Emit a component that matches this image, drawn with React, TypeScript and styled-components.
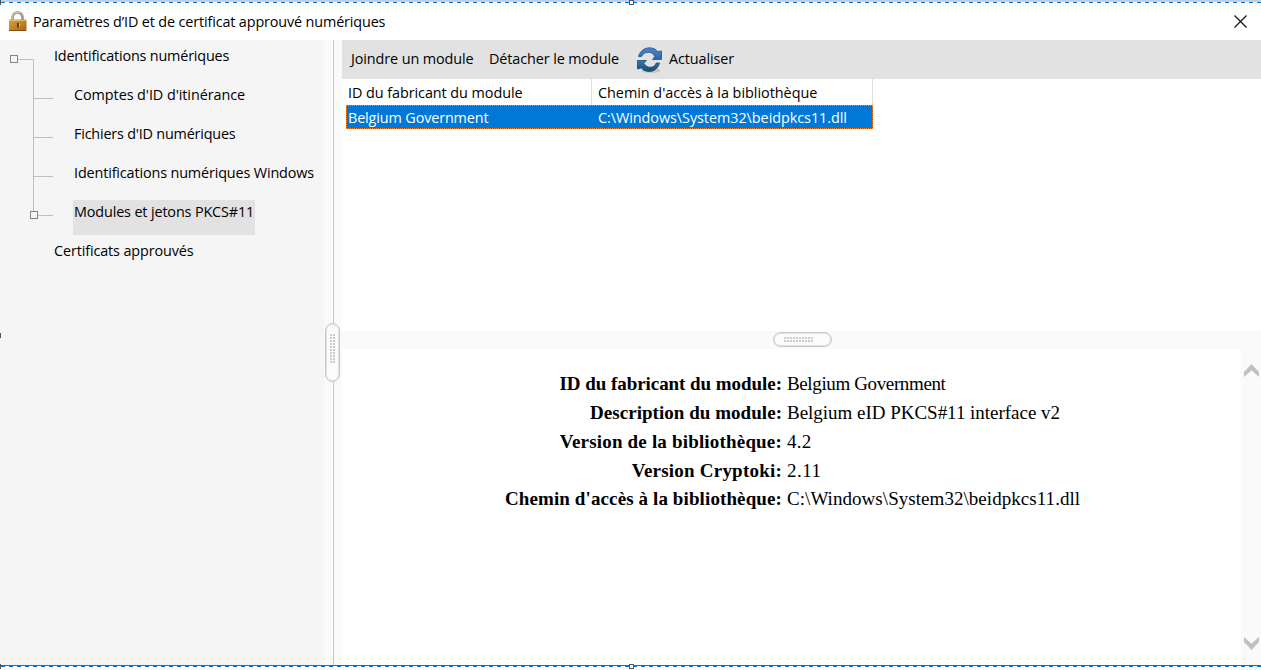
import React from 'react';
import styled, { createGlobalStyle } from 'styled-components';

const Global = createGlobalStyle`
  * { box-sizing: border-box; }
  body { margin: 0; background: #fff; }
`;

const Frame = styled.div`
  position: relative;
  width: 1261px;
  height: 670px;
  overflow: hidden;
  display: flex;
  flex-direction: column;
  background: #fff;
  color: #000;
  font: 14.4px/20px 'Open Sans', 'Noto Sans', sans-serif;
`;

const TopEdge = styled.div`
  height: 3px;
  flex: none;
  background: repeating-linear-gradient(90deg, transparent 0 1px, #0078d7 1px 5px, transparent 5px 9px) 0 2px / 8px 1px repeat-x,
    linear-gradient(#c3cfe3, #c3cfe3) 0 0 / 100% 2px no-repeat;
`;

const BottomEdge = styled.div`
  height: 5px;
  flex: none;
  border-top: 1px solid #0078d7;
  background: repeating-linear-gradient(90deg, transparent 0 1px, #0078d7 1px 5px, transparent 5px 9px) 0 0 / 8px 1px repeat-x;
`;

const Handle = styled.i<{ $x: number; $y: number }>`
  position: absolute;
  left: ${p => p.$x}px;
  top: ${p => p.$y}px;
  width: 5px;
  height: 5px;
  border: 1px solid #555;
  background: #fff;
`;

const Label = styled.span<{ $ls?: number }>`
  white-space: nowrap;
  letter-spacing: ${p => p.$ls ?? -0.1}px;
`;

const TitleBar = styled.header`
  height: 37px;
  flex: none;
  display: flex;
  align-items: center;
  padding: 0 13px 0 8px;
  svg { flex: none; }
`;

const TitleText = styled(Label)`
  flex: 1;
  margin-left: 6px;
`;

const Body = styled.main`
  flex: 1;
  min-height: 0;
  display: flex;
`;

const Sidebar = styled.nav`
  width: 324px;
  background: #f5f5f5;
`;

const TreeRow = styled.div`
  height: 39px;
  display: flex;
  align-items: flex-start;
`;

const Gutter = styled.div<{ $w: number }>`
  width: ${p => p.$w}px;
  height: 39px;
  flex: none;
`;

const TreeItem = styled.div<{ $selected?: boolean }>`
  height: 35px;
  margin-top: 4px;
  padding: 2px 1px 0;
  line-height: 20px;
  background: ${p => (p.$selected ? '#e2e2e2' : 'transparent')};
`;

const VSplit = styled.div`
  width: 18px;
  padding-left: 1px;
  background: linear-gradient(#c8c8c8, #c8c8c8) 9px 0 / 1px 100% no-repeat #fafafa;
`;

const GripBox = styled.div`
  border: 1px solid #c6c6c6;
  border-radius: 8px;
  box-shadow: inset 0 0 0 1px #e2e2e2;
  background: #fbfbfb;
  svg { display: block; }
`;

const VGrip = styled(GripBox)`
  width: 15px;
  height: 59px;
  margin-top: 283px;
  padding: 10px 0 0 4px;
`;

const HGrip = styled(GripBox)`
  width: 59px;
  height: 15px;
  padding: 4px 0 0 10px;
`;

const Content = styled.section`
  flex: 1;
  display: flex;
  flex-direction: column;
`;

const Toolbar = styled.div`
  height: 39px;
  flex: none;
  display: flex;
  align-items: center;
  padding: 0 0 2px 9px;
  background: #e2e2e2;
`;

const Tool = styled.button<{ $w: number }>`
  width: ${p => p.$w}px;
  flex: none;
  display: flex;
  align-items: center;
  padding: 0;
  border: 0;
  background: none;
  font: inherit;
  color: inherit;
  text-align: left;
  svg { margin: 2px 6px 0 0; flex: none; }
`;

const TablePane = styled.div`
  height: 252px;
  flex: none;
  padding-left: 4px;
`;

const HeadRow = styled.div`
  width: 527px;
  height: 26px;
  display: grid;
  grid-template-columns: 246px 281px;
`;

const Cell = styled.div<{ $pad: number }>`
  padding: 4px 0 0 ${p => p.$pad}px;
  border-right: 1px solid #e0e0e0;
`;

const DataRow = styled(HeadRow)`
  height: 24px;
  background: #0078d7;
  color: #fff;
  outline: 1px dotted #ff8728;
  outline-offset: -1px;
  ${Cell} { border-color: transparent; padding-top: 3px; }
`;

const HSplit = styled.div`
  height: 18px;
  flex: none;
  display: flex;
  justify-content: center;
  padding: 1px 0 0 1px;
  background: #fafafa;
`;

const Details = styled.div`
  flex: 1;
  display: flex;
  justify-content: space-between;
`;

const Facts = styled.dl`
  margin: 21px 0 0;
  width: 899px;
  display: grid;
  grid-template-columns: 440px 1fr;
  grid-template-rows: 29px 29px 29px 28px 29px;
  align-content: start;
  column-gap: 5px;
  font: 19px/28px 'Liberation Serif', serif;
`;

const Term = styled.dt<{ $ls: number }>`
  display: flex;
  justify-content: flex-end;
  font-weight: bold;
  white-space: nowrap;
  letter-spacing: ${p => p.$ls}px;
`;

const Value = styled.dd<{ $ls: number }>`
  margin: 0;
  white-space: nowrap;
  letter-spacing: ${p => p.$ls}px;
`;

const ScrollBar = styled.div`
  width: 20px;
  background: #fafafa;
  display: flex;
  flex-direction: column;
  justify-content: space-between;
  padding: 15px 0 15px 3px;
`;

const Lock = () => (
  <svg width="19" height="21" viewBox="0 0 19 21">
    <defs>
      <linearGradient id="brass" x1="0" y1="0" x2="1" y2="1">
        <stop offset="0" stopColor="#d9a43c" />
        <stop offset="1" stopColor="#a86412" />
      </linearGradient>
    </defs>
    <path d="M4.5 9V6.5a5 5 0 0 1 10 0V9" fill="none" stroke="#a6a08c" strokeWidth="3" />
    <path d="M4 8.5V6.5a5.4 5.4 0 0 1 8-4.6" fill="none" stroke="#dcd6be" strokeWidth="1" />
    <rect x="1" y="8.5" width="17.5" height="11.5" rx="1" fill="url(#brass)" />
    <path d="M1.5 9.4H18" stroke="#e8bd62" />
    <path d="M1 19.5H18" stroke="#8a4d0c" />
    <path d="M10 12v4.5" stroke="#54431f" strokeWidth="2" />
    <path d="M11.5 12.5v3" stroke="#e2b960" />
  </svg>
);

const Refresh = () => (
  <svg width="27" height="28" viewBox="0 0 27 28">
    <defs>
      <linearGradient id="steel" x1="0" y1="0" x2="0" y2="1">
        <stop offset="0" stopColor="#4d86c8" />
        <stop offset="1" stopColor="#2a66a8" />
      </linearGradient>
      <linearGradient id="deep" x1="0" y1="0" x2="0" y2="1">
        <stop offset="0" stopColor="#3a78c0" />
        <stop offset="1" stopColor="#164c60" />
      </linearGradient>
    </defs>
    <ellipse cx="15" cy="24.500" rx="9.500" ry="2.500" fill="#999" opacity=".4" />
    <path d="M2.500 10.500C4 5 8.500 1.800 13.500 1.800c3.700 0 6.200 1.300 8.200 3.700L25.500 5v8.500h-9l2.300-3C17.500 7.800 15.300 6.300 12.500 6.300c-3 0-5.500 1.400-7 4.200z" fill="url(#steel)" stroke="#20558c" strokeWidth=".8" />
    <path d="M23.500 17c-1.500 5.500-5.500 8.500-10 8.500-3.700 0-6.200-1.300-8.200-3.600L1.500 23v-8.500h9L7.800 17.300C9.500 20 11.700 21.300 14 21.300c3 0 5-1.500 6.300-4.300z" fill="url(#deep)" stroke="#174c74" strokeWidth=".8" />
  </svg>
);

const CloseIcon = styled.svg`
  width: 13px;
  height: 13px;
  margin: 0 1px 1px 0;
`;

const Close = () => (
  <CloseIcon viewBox="0 0 13 13">
    <path d="M.5.5l12 12M12.500.5L.5 12.500" stroke="#111" strokeWidth="1.2" />
  </CloseIcon>
);

const Chevron = ({ down }: { down?: boolean }) => (
  <svg width="15" height="13" viewBox="0 0 15 13">
    <path d={down ? 'M0 0v5l7.500 8L15 5V0L7.500 6.800z' : 'M0 13V8l7.500-8L15 8v5L7.500 6.200z'} fill="#c0c0c0" />
  </svg>
);

const Dots = ({ cols, rows }: { cols: number; rows: number }) => (
  <svg width={cols * 3 - 1} height={rows * 3 - 1} shapeRendering="crispEdges">
    {Array.from({ length: cols * rows }, (_, i) => (
      <rect key={i} x={(i % cols) * 3} y={Math.floor(i / cols) * 3} width="2" height="2" fill="#ccc" />
    ))}
  </svg>
);

const Branch = ({ kind }: { kind: string }) => (
  <svg width="53" height="39" fill="none" stroke="#bfbfbf" shapeRendering="crispEdges">
    {kind === 'root' && <path d="M18 19.500H33.500V39" />}
    {kind === 'mid' && <path d="M33.500 0V39M33 19.500H53" />}
    {kind === 'last' && <path d="M33.500 0V15M38 19.500H53" />}
    {kind === 'root' && <rect x="10.500" y="15.500" width="7" height="7" stroke="#868686" />}
    {kind === 'last' && <rect x="30.500" y="15.500" width="7" height="7" stroke="#868686" />}
  </svg>
);

const tree = [
  { text: 'Identifications numériques', kind: 'root', w: 53, ls: -0.18 },
  { text: "Comptes d'ID d'itinérance", kind: 'mid', w: 73, ls: -0.07 },
  { text: "Fichiers d'ID numériques", kind: 'mid', w: 73, ls: -0.2 },
  { text: 'Identifications numériques Windows', kind: 'mid', w: 73, ls: -0.14 },
  { text: 'Modules et jetons PKCS#11', kind: 'last', w: 73, ls: -0.14, selected: true },
  { text: 'Certificats approuvés', kind: 'none', w: 53, ls: -0.12 },
];

const facts = [
  { term: 'ID du fabricant du module:', value: 'Belgium Government', a: -0.05, b: -0.37 },
  { term: 'Description du module:', value: 'Belgium eID PKCS#11 interface v2', a: 0.04, b: -0.02 },
  { term: 'Version de la bibliothèque:', value: '4.2', a: 0.18, b: 0.3 },
  { term: 'Version Cryptoki:', value: '2.11', a: 0.22, b: 0.5 },
  { term: "Chemin d'accès à la bibliothèque:", value: 'C:\\Windows\\System32\\beidpkcs11.dll', a: 0.11, b: 0.05 },
];

export default function App() {
  return (
    <Frame>
      <Global />
      <TopEdge />
      <TitleBar>
        <Lock />
        <TitleText $ls={-0.14}>Paramètres d’ID et de certificat approuvé numériques</TitleText>
        <Close />
      </TitleBar>
      <Body>
        <Sidebar>
          {tree.map(n => (
            <TreeRow key={n.text}>
              <Gutter $w={n.w}><Branch kind={n.kind} /></Gutter>
              <TreeItem $selected={n.selected}><Label $ls={n.ls}>{n.text}</Label></TreeItem>
            </TreeRow>
          ))}
        </Sidebar>
        <VSplit>
          <VGrip><Dots cols={2} rows={10} /></VGrip>
        </VSplit>
        <Content>
          <Toolbar>
            <Tool $w={138}><Label>Joindre un module</Label></Tool>
            <Tool $w={147}><Label>Détacher le module</Label></Tool>
            <Tool $w={110}><Refresh /><Label>Actualiser</Label></Tool>
          </Toolbar>
          <TablePane>
            <HeadRow>
              <Cell $pad={2}><Label $ls={-0.06}>ID du fabricant du module</Label></Cell>
              <Cell $pad={6}><Label $ls={-0.02}>Chemin d'accès à la bibliothèque</Label></Cell>
            </HeadRow>
            <DataRow>
              <Cell $pad={2}><Label $ls={-0.13}>Belgium Government</Label></Cell>
              <Cell $pad={6}><Label $ls={-0.05}>C:\Windows\System32\beidpkcs11.dll</Label></Cell>
            </DataRow>
          </TablePane>
          <HSplit>
            <HGrip><Dots cols={10} rows={2} /></HGrip>
          </HSplit>
          <Details>
            <Facts>
              {facts.map(f => (
                <React.Fragment key={f.term}>
                  <Term $ls={f.a}>{f.term}</Term>
                  <Value $ls={f.b}>{f.value}</Value>
                </React.Fragment>
              ))}
            </Facts>
            <ScrollBar><Chevron /><Chevron down /></ScrollBar>
          </Details>
        </Content>
      </Body>
      <BottomEdge />
      <Handle $x={-4} $y={0} />
      <Handle $x={629} $y={0} />
      <Handle $x={-4} $y={333} />
      <Handle $x={-4} $y={664} />
      <Handle $x={629} $y={664} />
    </Frame>
  );
}
